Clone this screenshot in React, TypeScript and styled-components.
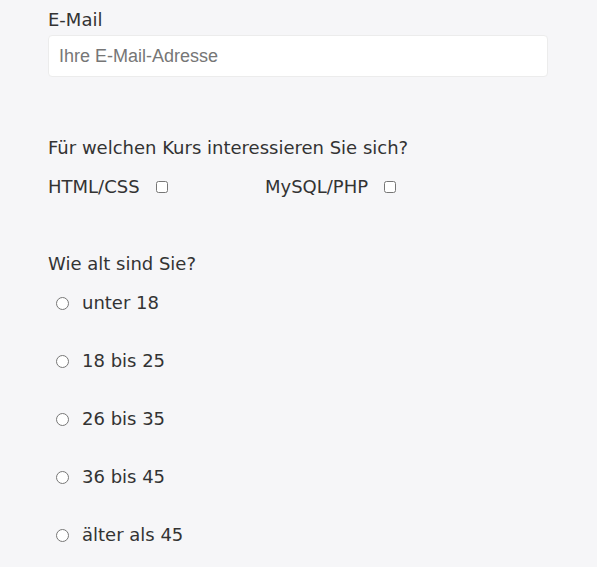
import React from "react";
import styled, { createGlobalStyle } from "styled-components";

const GlobalStyle = createGlobalStyle`
  body {
    margin: 0;
    background: #f6f6f8;
    font-family: "DejaVu Sans", Verdana, sans-serif;
    color: #333;
  }
`;

const Form = styled.form`
  width: 500px;
  padding: 10px 0 0 48px;
  display: flex;
  flex-direction: column;
`;

const Label = styled.label`
  display: block;
  font-size: 18px;
  line-height: 20px;
  color: #333;
`;

const EmailInput = styled.input`
  box-sizing: border-box;
  width: 500px;
  height: 42px;
  margin-top: 5px;
  padding: 0 10px;
  border: 1px solid #ececec;
  border-radius: 4px;
  background: #fff;
  font-family: "Liberation Sans", Arial, sans-serif;
  font-size: 18px;
  color: #333;
  outline: none;

  &::placeholder {
    color: #767676;
  }
`;

const Question = styled.p<{ $top: number }>`
  margin: ${(p) => p.$top}px 0 0;
  font-size: 18px;
  line-height: 20px;
`;

const CheckRow = styled.div`
  display: flex;
  margin-top: 19px;
`;

const CheckOption = styled.label<{ $width: number }>`
  display: flex;
  align-items: center;
  width: ${(p) => p.$width}px;
  font-size: 18px;
  line-height: 20px;
`;

const Check = styled.input`
  width: 12px;
  height: 12px;
  margin: 0 0 0 16px;
`;

const RadioList = styled.div`
  display: flex;
  flex-direction: column;
  gap: 38px;
  margin-top: 19px;
  padding-left: 8px;
`;

const RadioOption = styled.label`
  display: flex;
  align-items: center;
  font-size: 18px;
  line-height: 20px;
`;

const Radio = styled.input`
  width: 13px;
  height: 13px;
  margin: 0 13px 0 0;
`;

const ages = ["unter 18", "18 bis 25", "26 bis 35", "36 bis 45", "älter als 45"];

export default function App() {
  return (
    <>
      <GlobalStyle />
      <Form>
        <Label htmlFor="email">E-Mail</Label>
        <EmailInput id="email" type="email" placeholder="Ihre E-Mail-Adresse" />
        <Question $top={61}>Für welchen Kurs interessieren Sie sich?</Question>
        <CheckRow>
          <CheckOption $width={217}>
            HTML/CSS
            <Check type="checkbox" />
          </CheckOption>
          <CheckOption $width={200}>
            MySQL/PHP
            <Check type="checkbox" />
          </CheckOption>
        </CheckRow>
        <Question $top={57}>Wie alt sind Sie?</Question>
        <RadioList>
          {ages.map((a) => (
            <RadioOption key={a}>
              <Radio type="radio" name="age" />
              {a}
            </RadioOption>
          ))}
        </RadioList>
      </Form>
    </>
  );
}
